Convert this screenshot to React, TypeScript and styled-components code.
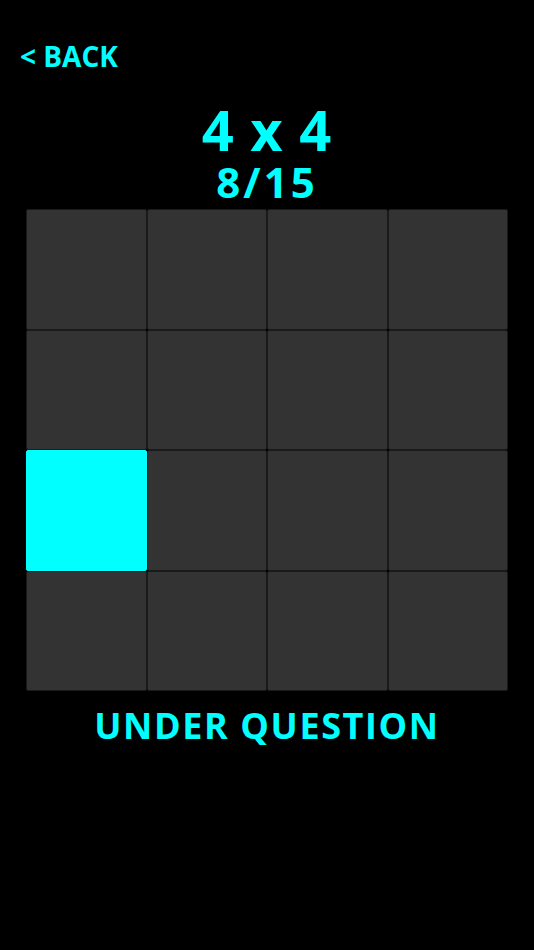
import React from "react";
import styled, { createGlobalStyle } from "styled-components";

const Global = createGlobalStyle`
  html, body { margin: 0; padding: 0; background: #000; }
  body { font-family: "Open Sans", "Noto Sans", sans-serif; }
`;

const Page = styled.div`
  width: 534px;
  min-height: 950px;
  background: #000;
  color: #00ffff;
  display: flex;
  flex-direction: column;
  align-items: center;
`;

const BackRow = styled.div`
  align-self: stretch;
  padding: 42px 0 0 20px;
  line-height: 1;
`;

const BackButton = styled.button`
  background: none;
  border: none;
  padding: 0;
  margin: 0;
  color: #00ffff;
  font-family: inherit;
  font-weight: 700;
  font-size: 28px;
  line-height: 1;
  cursor: pointer;
`;

const Title = styled.div<{ $size: number; $top: number; $spacing?: number }>`
  font-weight: 700;
  font-size: ${(p) => p.$size}px;
  line-height: 1;
  letter-spacing: ${(p) => p.$spacing ?? 0}px;
  margin-top: ${(p) => p.$top}px;
  white-space: pre;
`;

const Board = styled.div`
  margin-top: 6px;
  width: 482px;
  height: 482px;
  display: grid;
  grid-template-columns: repeat(4, 1fr);
  grid-template-rows: repeat(4, 1fr);
`;

const Cell = styled.div<{ $active: boolean }>`
  box-sizing: border-box;
  border: 1px solid ${(p) => (p.$active ? "#00ffff" : "#1a1a1a")};
  border-radius: 2px;
  background: ${(p) => (p.$active ? "#00ffff" : "#333333")};
`;

const Status = styled.div`
  margin-top: 17px;
  font-weight: 700;
  font-size: 36px;
  line-height: 1;
  letter-spacing: 1.6px;
`;

export default function App() {
  const active = 8;
  return (
    <>
      <Global />
      <Page>
        <BackRow>
          <BackButton>&lt; BACK</BackButton>
        </BackRow>
        <Title $size={56} $top={31} $spacing={1}>4 x 4</Title>
        <Title $size={42} $top={4} $spacing={3}>8/15</Title>
        <Board>
          {Array.from({ length: 16 }, (_, i) => (
            <Cell key={i} $active={i === active} />
          ))}
        </Board>
        <Status>UNDER QUESTION</Status>
      </Page>
    </>
  );
}
